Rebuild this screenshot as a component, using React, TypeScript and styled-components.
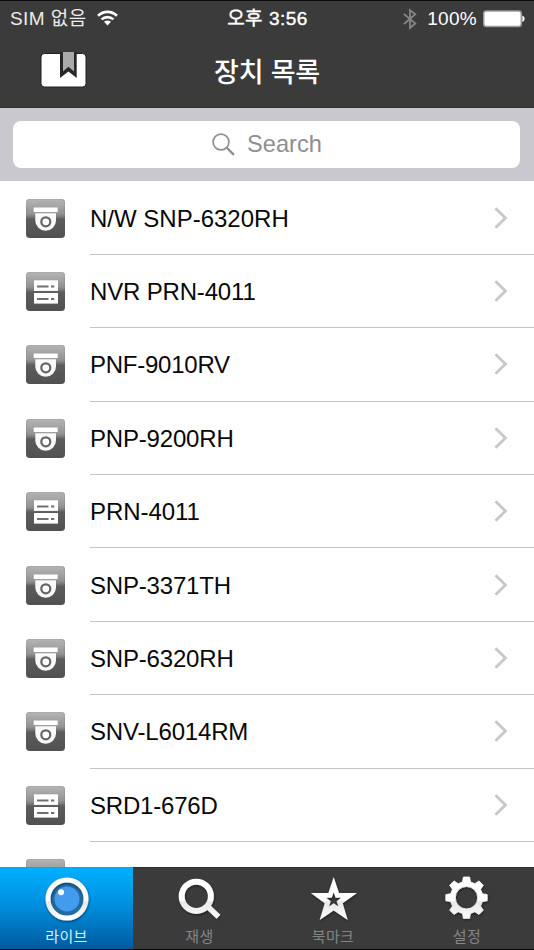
import React from 'react';
import styled, { createGlobalStyle } from 'styled-components';

const GlobalStyle = createGlobalStyle`
  * { box-sizing: border-box; }
  html, body { margin: 0; padding: 0; overflow: hidden; }
  body { font-family: "Liberation Sans", "Noto Sans CJK KR", sans-serif; background: #fff; }
  svg { display: block; flex: none; }
`;

const Screen = styled.div`
  width: 534px;
  height: 950px;
  display: flex;
  flex-direction: column;
  background: #fff;
  overflow: hidden;
`;

const Header = styled.header`
  flex: none;
  height: 108px;
  background: #3b3b3b;
  border-top: 1px solid #0c0c0c;
  border-bottom: 1px solid #303030;
  color: #fff;
`;

const StatusBar = styled.div`
  height: 35px;
  display: grid;
  grid-template-columns: 1fr auto 1fr;
  align-items: center;
  padding: 0 9px 0 10px;
  font-size: 19px;
  line-height: 34px;
  white-space: nowrap;
`;

const StatusGroup = styled.div<{ $end?: boolean }>`
  display: flex;
  align-items: center;
  justify-content: ${p => (p.$end ? 'flex-end' : 'flex-start')};
`;

const Carrier = styled.span`
  color: #ececec;
  letter-spacing: 0.45px;
  margin-right: 10px;
`;

const Clock = styled.span`
  letter-spacing: 0.5px;
  -webkit-text-stroke: 0.4px #fff;
`;

const Percent = styled.span`
  margin: 0 6px 0 10px;
  letter-spacing: 0.3px;
`;

const TitleBar = styled.div`
  height: 71px;
  display: grid;
  grid-template-columns: 88px 1fr 88px;
  align-items: center;
`;

const BookmarkButton = styled.div`
  padding: 0 0 5px 40px;
`;

const Title = styled.h1`
  margin: 0;
  padding-top: 2px;
  text-align: center;
  font-size: 27px;
  font-weight: 500;
  line-height: 71px;
  letter-spacing: -0.2px;
`;

const SearchArea = styled.div`
  flex: none;
  height: 73px;
  padding: 13px 14px 13px 13px;
  background: #c9c8ce;
`;

const SearchField = styled.div`
  height: 47px;
  padding: 0 0 1px 1px;
  border-radius: 8px;
  background: #fff;
  color: #8e8e93;
  display: flex;
  align-items: center;
  justify-content: center;
  gap: 12px;
  font-size: 23.6px;
  letter-spacing: 0.05px;
`;

const DeviceList = styled.div`
  flex: 1;
  min-height: 0;
  padding-top: 0.5px;
  overflow: hidden;
`;

const Row = styled.div`
  height: 73.4px;
  display: flex;
  align-items: center;
  padding-left: 26px;
`;

const RowBody = styled.div`
  flex: 1;
  height: 100%;
  margin-left: 25px;
  padding: 0 26px 0 0;
  border-bottom: 1px solid #c4c4c6;
  display: flex;
  align-items: center;
  justify-content: space-between;
`;

const DeviceName = styled.span<{ $spacing: number }>`
  padding-top: 2px;
  font-size: 24px;
  line-height: 30px;
  color: #080808;
  letter-spacing: ${p => p.$spacing}px;
  white-space: nowrap;
`;

const DeviceBadge = styled.div`
  width: 39px;
  height: 39px;
  border-radius: 4px;
  background: linear-gradient(#b5b5b5 0, #929292 15px, #777 18px, #5c5c5c 20px, #515151 39px);
  box-shadow: inset 0 0 1px #555;
`;

const TabBar = styled.nav`
  flex: none;
  height: 83px;
  display: grid;
  grid-template-columns: 133px 133px 134px 134px;
  background: #3b3b3b;
  border-bottom: 1px solid #080808;
`;

const Tab = styled.div<{ $active?: boolean }>`
  display: flex;
  flex-direction: column;
  align-items: center;
  padding-top: 7px;
  border-top: 1px solid ${p => (p.$active ? '#0aa5ee' : '#303030')};
  color: ${p => (p.$active ? '#d9eefc' : '#858585')};
  background: ${p => (p.$active ? 'linear-gradient(#00b0ff, #008ddc 48%, #005a9e)' : 'transparent')};
`;

const TabLabel = styled.span`
  margin-top: 3px;
  font-size: 15px;
  line-height: 22px;
  letter-spacing: 0.4px;
`;

const WifiIcon = () => (
  <svg width="21" height="17" viewBox="0 0 21 17" fill="none" stroke="#fff" strokeWidth="2.6">
    <path d="M1 5.8C6.5 0.6 14.5 0.6 20 5.8" />
    <path d="M4.5 9.4C8 6.3 13 6.3 16.5 9.4" />
    <path d="M7 11.8Q10.5 9 14 11.8L10.5 15.4Z" fill="#fff" stroke="none" />
  </svg>
);

const BluetoothIcon = () => (
  <svg width="14" height="22" viewBox="0 0 14 22" fill="none" stroke="#858585" strokeWidth="1.8">
    <path d="M1 6L12.3 15.5L7 20V2L12.3 6.2L1 16" />
  </svg>
);

const BatteryIcon = () => (
  <svg width="42" height="18" viewBox="0 0 42 18">
    <rect x="0.75" y="1" width="37.5" height="15.5" rx="2.5" fill="#fff" stroke="#9b9b9b" strokeWidth="1.5" />
    <path d="M39.3 5.5Q41.7 6.4 41.7 8.8T39.3 12Z" fill="#fff" />
  </svg>
);

const BookIcon = () => (
  <svg width="48" height="38" viewBox="0 0 48 38">
    <rect x="1" y="2.5" width="45" height="33.5" rx="3.5" fill="#fff" stroke="#202020" strokeWidth="1" />
    <path d="M20 1H36.7V27L28.4 20.5L20 27Z" fill="#272727" />
    <path d="M23 1H34V20.5L28.4 15.8L23 20.5Z" fill="#aaa" />
  </svg>
);

const SearchIcon = () => (
  <svg width="23" height="23" viewBox="0 0 23 23" fill="none" stroke="#8e8e93" strokeLinecap="round">
    <circle cx="9" cy="9" r="7.9" strokeWidth="1.7" />
    <path d="M15 15L21.2 21.2" strokeWidth="2.4" />
  </svg>
);

const DomeGlyph = () => (
  <svg width="39" height="39" viewBox="0 0 39 39">
    <rect x="7.7" y="8.5" width="24" height="4.6" fill="#fff" />
    <path d="M9.3 14.3H30V21.4A10.35 10.35 0 0 1 9.3 21.4Z" fill="#f9f9f9" />
    <circle cx="19.8" cy="22.8" r="4.5" fill="#fff" stroke="#656565" strokeWidth="2.2" />
  </svg>
);

const RecorderGlyph = () => (
  <svg width="39" height="39" viewBox="0 0 39 39">
    <rect x="8" y="8.3" width="24" height="10.6" fill="#fff" />
    <rect x="8" y="21" width="24" height="10.6" fill="#fff" />
    <path d="M11 14.5H22.5M25 14.5H28.3M11 27H22.5M25 27H28.3" stroke="#707070" strokeWidth="1.8" />
  </svg>
);

const Chevron = () => (
  <svg width="14" height="22" viewBox="0 0 14 22" fill="none" stroke="#c7c7cc" strokeWidth="2.8">
    <path d="M1.5 1.3L11.4 11L1.5 20.7" />
  </svg>
);

const Shade = ({ id }: { id: string }) => (
  <defs>
    <linearGradient id={id} gradientUnits="userSpaceOnUse" x1="0" y1="2" x2="0" y2="46">
      <stop offset="0" stopColor="#fff" />
      <stop offset="0.53" stopColor="#fff" />
      <stop offset="0.57" stopColor="#e8e8e8" />
      <stop offset="1" stopColor="#fff" />
    </linearGradient>
    <filter id={`${id}-shadow`} x="-20%" y="-20%" width="140%" height="140%">
      <feDropShadow dx="0.5" dy="1.2" stdDeviation="0.8" floodColor="#000" floodOpacity="0.5" />
    </filter>
  </defs>
);

const LiveIcon = () => (
  <svg width="48" height="48" viewBox="0 0 48 48">
    <Shade id="live" />
    <circle cx="24" cy="24" r="16.5" fill="#226c9f" />
    <circle cx="24" cy="24" r="12.5" fill="#429bed" />
    <circle cx="24" cy="24" r="19" fill="none" stroke="url(#live)" strokeWidth="5" filter="url(#live-shadow)" />
    <circle cx="18" cy="17.2" r="3" fill="#fff" />
  </svg>
);

const PlaybackIcon = () => (
  <svg width="48" height="48" viewBox="0 0 48 48">
    <Shade id="play" />
    <g fill="none" stroke="url(#play)" filter="url(#play-shadow)">
      <circle cx="20.3" cy="21.3" r="14.6" strokeWidth="6" />
      <path d="M31.1 31L42.5 41.8" strokeWidth="5.5" />
    </g>
  </svg>
);

const StarIcon = () => (
  <svg width="48" height="48" viewBox="0 0 48 48">
    <Shade id="star" />
    <path
      fill="url(#star)" fillRule="evenodd" filter="url(#star-shadow)"
      d="M24.7 2L30 18H48L33.7 28.2L38.7 45L24.7 35.4L10.7 45L15.7 28.2L1.8 18H19.4Z
        M24.7 17.2L22.8 22.8H17.2L21.8 26.2L20 31.6L24.7 28.3L29.4 31.6L27.6 26.2L32.2 22.8H26.6Z"
    />
  </svg>
);

const gearOutline = Array.from({ length: 8 }, (_, tooth) =>
  [[-14, 16.3], [-8.5, 20.9], [8.5, 20.9], [14, 16.3]].map(([offset, radius]) => {
    const angle = ((tooth * 45 + offset - 90) * Math.PI) / 180;
    return `${(23.5 + radius * Math.cos(angle)).toFixed(2)},${(22.7 + radius * Math.sin(angle)).toFixed(2)}`;
  }).join(' L'),
).join(' L');

const GearIcon = () => (
  <svg width="48" height="48" viewBox="0 0 48 48">
    <Shade id="gear" />
    <path
      fill="url(#gear)" fillRule="evenodd" filter="url(#gear-shadow)"
      stroke="url(#gear)" strokeWidth="0.8" strokeLinejoin="round"
      d={`M${gearOutline}Z M34.7 22.7A11.2 11.2 0 1 0 12.3 22.7A11.2 11.2 0 1 0 34.7 22.7Z`}
    />
  </svg>
);

const devices = [
  { name: 'N/W SNP-6320RH', kind: 'dome', spacing: 0 },
  { name: 'NVR PRN-4011', kind: 'recorder', spacing: -0.17 },
  { name: 'PNF-9010RV', kind: 'dome', spacing: -0.25 },
  { name: 'PNP-9200RH', kind: 'dome', spacing: -0.18 },
  { name: 'PRN-4011', kind: 'recorder', spacing: -0.05 },
  { name: 'SNP-3371TH', kind: 'dome', spacing: -0.18 },
  { name: 'SNP-6320RH', kind: 'dome', spacing: -0.18 },
  { name: 'SNV-L6014RM', kind: 'dome', spacing: -0.18 },
  { name: 'SRD1-676D', kind: 'recorder', spacing: -0.2 },
  { name: '', kind: 'dome', spacing: 0 },
];

const tabs = [
  { label: '라이브', Icon: LiveIcon },
  { label: '재생', Icon: PlaybackIcon },
  { label: '북마크', Icon: StarIcon },
  { label: '설정', Icon: GearIcon },
];

export default function App() {
  return (
    <>
      <GlobalStyle />
      <Screen>
        <Header>
          <StatusBar>
            <StatusGroup><Carrier>SIM 없음</Carrier><WifiIcon /></StatusGroup>
            <Clock>오후 3:56</Clock>
            <StatusGroup $end><BluetoothIcon /><Percent>100%</Percent><BatteryIcon /></StatusGroup>
          </StatusBar>
          <TitleBar>
            <BookmarkButton><BookIcon /></BookmarkButton>
            <Title>장치 목록</Title>
          </TitleBar>
        </Header>
        <SearchArea>
          <SearchField><SearchIcon /><span>Search</span></SearchField>
        </SearchArea>
        <DeviceList>
          {devices.map((device, index) => (
            <Row key={index}>
              <DeviceBadge>{device.kind === 'dome' ? <DomeGlyph /> : <RecorderGlyph />}</DeviceBadge>
              <RowBody>
                <DeviceName $spacing={device.spacing}>{device.name}</DeviceName>
                <Chevron />
              </RowBody>
            </Row>
          ))}
        </DeviceList>
        <TabBar>
          {tabs.map(({ label, Icon }, index) => (
            <Tab key={label} $active={index === 0}><Icon /><TabLabel>{label}</TabLabel></Tab>
          ))}
        </TabBar>
      </Screen>
    </>
  );
}
